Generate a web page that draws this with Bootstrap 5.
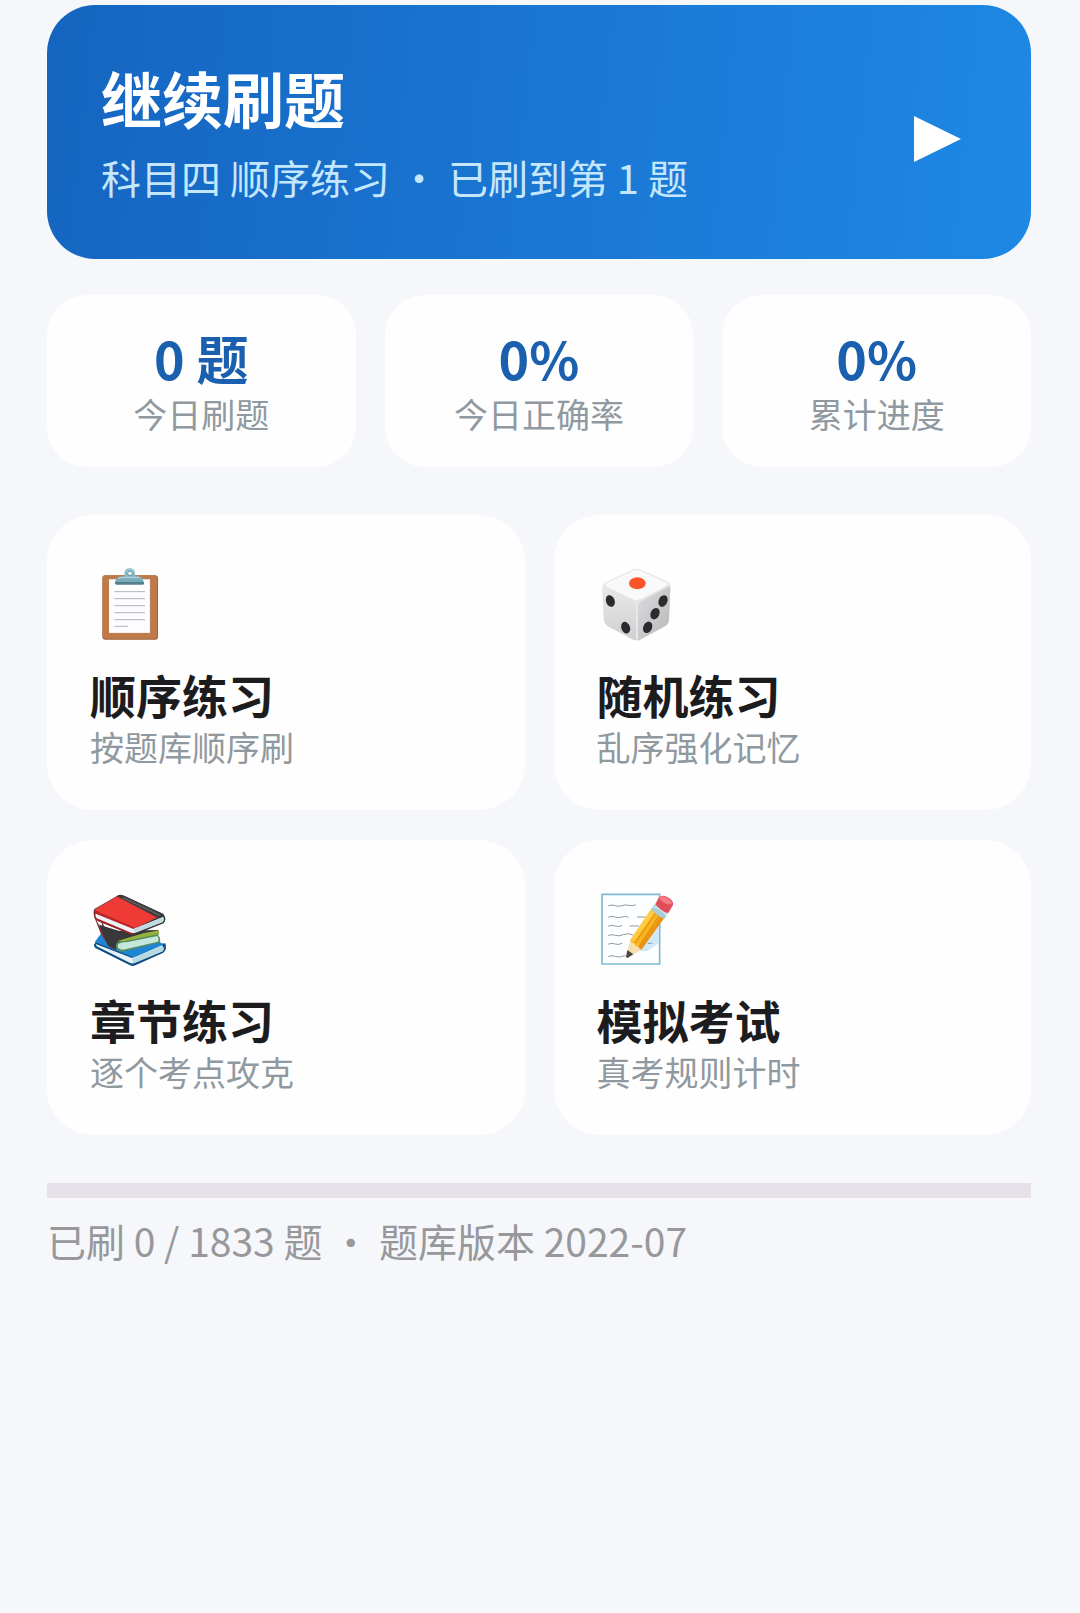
<!DOCTYPE html>
<html lang="zh-CN">
<head>
<meta charset="utf-8">
<meta name="viewport" content="width=device-width, initial-scale=1">
<title>驾考刷题</title>
<link href="https://cdn.jsdelivr.net/npm/bootstrap@5.3.0/dist/css/bootstrap.min.css" rel="stylesheet">
<style>
  body { background: #f5f7fb; font-family: "Noto Sans CJK SC", sans-serif; color: #1c1c1e; }
  .page { padding: 5px 49px 48px 47px; }
  .hero { padding: 54px 70px 58px 54px; border-radius: 48px; color: #fff; background: linear-gradient(96deg, #1565c0, #1e88e5); }
  .hero:hover { color: #fff; }
  .hero-title { font-size: 61px; line-height: 78px; font-weight: 700; }
  .hero-sub { font-size: 40px; line-height: 48px; margin-top: 16px; color: #c5e7fd; }
  .play { margin-top: 18px; }
  .tiles { --bs-gutter-x: 29px; --bs-gutter-y: 30px; }
  .stats { padding-top: 36px; }
  .modes { padding-top: 48px; }
  .panel { border: 0; background: #fefefe; }
  .stat { padding: 30px 16px; border-radius: 40px; }
  .stat-value { font-size: 52px; line-height: 66px; font-weight: 700; color: #1a60ae; }
  .caption { font-size: 34px; line-height: 46px; color: #90999f; }
  .mode { padding: 49px 43px 40px; border-radius: 46px; color: #1c1c1e; }
  .mode-icon { width: 80px; height: 80px; margin-bottom: 20px; }
  .mode-title { font-size: 46px; line-height: 60px; font-weight: 700; }
  .meter { height: 15px; margin-top: 48px; border-radius: 0; background: #e6e1e8; }
  .summary { font-size: 39px; line-height: 56px; margin-top: 14px; color: #98989b; }
</style>
</head>
<body>
<main class="page">
  <a href="#continue" class="hero d-flex align-items-center justify-content-between text-decoration-none">
    <div>
      <h1 class="hero-title mb-0">继续刷题</h1>
      <p class="hero-sub mb-0">科目四 顺序练习 · 已刷到第 1 题</p>
    </div>
    <svg class="play flex-shrink-0" width="48" height="48" viewBox="0 0 48 48" aria-hidden="true"><path d="M1 1 48 24 1 47Z" fill="#fff"/></svg>
  </a>

  <section class="stats">
    <div class="row row-cols-3 tiles gy-0 text-center">
      <div class="col"><div class="card panel stat"><div class="stat-value">0 题</div><div class="caption">今日刷题</div></div></div>
      <div class="col"><div class="card panel stat"><div class="stat-value">0%</div><div class="caption">今日正确率</div></div></div>
      <div class="col"><div class="card panel stat"><div class="stat-value">0%</div><div class="caption">累计进度</div></div></div>
    </div>
  </section>

  <nav class="modes">
    <div class="row row-cols-2 tiles mt-0">
      <div class="col mt-0">
        <a href="#sequence" class="card panel mode text-decoration-none">
          <svg class="mode-icon" viewBox="30 42 240 240" aria-hidden="true">
            <defs><linearGradient id="clip" x1="0" y1="0" x2="0" y2="1"><stop offset="0" stop-color="#9cc9d6"/><stop offset="1" stop-color="#6fa3b3"/></linearGradient></defs>
            <rect x="67" y="76" width="167" height="193" rx="9" fill="#9c6339"/>
            <rect x="68" y="76" width="163" height="190" rx="8" fill="#bf7a47"/>
            <path d="M87 88H211V250H87Z" fill="#fdfdff"/>
            <path d="M211 88V250H87" fill="none" stroke="#a7683c" stroke-width="2"/>
            <path d="M103 125H195M103 146H195M103 167H195M103 188H195M103 209H195M103 229H144" stroke="#b4b2b8" stroke-width="3"/>
            <path d="M133 78V70Q133 55 149 54Q165 55 165 70V78L181 80Q190 81 191 101H105Q106 82 118 80Z" fill="url(#clip)"/>
            <path d="M105 96H192V101Q192 104 188 104H110Q105 104 105 99Z" fill="#547f8d"/>
            <circle cx="150" cy="70" r="7" fill="#f4fafb" stroke="#5f92a2" stroke-width="3"/>
            <path d="M114 85Q120 82 134 82H177" fill="none" stroke="#b8dbe3" stroke-width="3"/>
          </svg>
          <div class="mode-title">顺序练习</div>
          <div class="caption">按题库顺序刷</div>
        </a>
      </div>
      <div class="col mt-0">
        <a href="#random" class="card panel mode text-decoration-none">
          <svg class="mode-icon" viewBox="21 42 240 240" aria-hidden="true">
            <defs>
              <linearGradient id="dieL" x1="0" y1="0" x2="0" y2="1"><stop offset="0" stop-color="#e8e8e9"/><stop offset="1" stop-color="#d0d0d2"/></linearGradient>
              <linearGradient id="dieR" x1="0" y1="0" x2="1" y2="1"><stop offset="0" stop-color="#dcdcde"/><stop offset="1" stop-color="#b8b8bb"/></linearGradient>
            </defs>
            <path d="M50 96 127 59Q140 53 153 59L230 94Q241 100 241 114L237 210Q236 222 226 228L156 266Q141 275 126 267L54 229Q44 223 42 211L37 116Q37 102 50 96Z" fill="#e4e4e6"/>
            <path d="M38 110 132 157Q139 162 139 171V271Q132 271 126 267L54 229Q44 223 42 211L37 118Z" fill="url(#dieL)"/>
            <path d="M240 108 152 155Q143 160 143 171V272Q149 271 156 266L226 228Q236 222 237 210L241 114Z" fill="url(#dieR)"/>
            <path d="M51 98 129 62Q140 57 152 62L228 97Q237 103 227 109L153 147Q140 154 127 147L51 111Q41 105 51 98Z" fill="#f9f9fa"/>
            <path d="M141 158V266" stroke="#e9e9eb" stroke-width="5" stroke-linecap="round"/>
            <ellipse cx="142" cy="100" rx="25" ry="18" fill="#f8552b"/>
            <g fill="#2b2b2e">
              <ellipse cx="61" cy="153" rx="13" ry="18" transform="rotate(-20 61 153)"/>
              <ellipse cx="107" cy="233" rx="13" ry="18" transform="rotate(-20 107 233)"/>
              <ellipse cx="219" cy="153" rx="13" ry="18" transform="rotate(25 219 153)"/>
              <ellipse cx="195" cy="191" rx="13" ry="18" transform="rotate(25 195 191)"/>
              <ellipse cx="173" cy="232" rx="13" ry="18" transform="rotate(25 173 232)"/>
            </g>
          </svg>
          <div class="mode-title">随机练习</div>
          <div class="caption">乱序强化记忆</div>
        </a>
      </div>
      <div class="col">
        <a href="#chapter" class="card panel mode text-decoration-none">
          <svg class="mode-icon" viewBox="30 27 240 240" aria-hidden="true">
            <path d="M42 194 70 152 160 200 256 190Q262 208 250 218L166 256Q158 260 150 256L46 204Q41 200 42 194Z" fill="#124d82"/>
            <path d="M44 186 70 152 240 186 250 194 160 232Z" fill="#1c86d4"/>
            <path d="M47 192 156 234Q166 231 246 196Q254 206 248 214L164 249Q156 252 149 248L50 199Z" fill="#e4f3f7"/>
            <path d="M157 236 248 197Q254 206 248 214L160 250Z" fill="#b4d9e2"/>
            <path d="M43 112 66 125 108 208Q92 206 84 196L62 160Z" fill="#7b2d32"/>
            <path d="M43 112 62 118 70 150 58 136Z" fill="#fefefe"/>
            <path d="M58 134 116 152 234 150Q240 156 236 164L120 184 108 210 84 196Z" fill="#38383b"/>
            <path d="M112 183 190 160 236 151Q240 158 236 164L150 190Z" fill="#94b23e"/>
            <path d="M110 188Q118 182 134 184L232 163Q246 176 238 188L136 213Q122 217 112 211Q104 200 110 188Z" fill="#588b60"/>
            <path d="M116 191Q126 185 140 187L232 168Q239 178 233 185L136 208Q124 211 116 205Q110 198 116 191Z" fill="#c5e8dc"/>
            <path d="M42 88 112 47Q120 42 132 47L250 102Q262 116 251 130L168 163Q160 168 150 163L48 121Q38 106 42 88Z" fill="#38383b"/>
            <path d="M42 100 158 150V165L48 121Q41 112 42 100Z" fill="#a52327"/>
            <path d="M42 90 112 48 236 110 162 146Z" fill="#ee3b35"/>
            <path d="M110 49Q120 42 132 47L250 102 230 112Z" fill="#3b3b3e"/>
            <path d="M128 53 240 106" stroke="#66666a" stroke-width="4"/>
            <path d="M42 90 162 142 160 150 46 103Z" fill="#bb2428"/>
            <path d="M47 101 160 147Q170 143 249 111Q254 119 248 126L166 158Q158 161 150 157L50 115Q44 108 47 101Z" fill="#eef3f5"/>
            <path d="M161 147 249 111Q254 119 248 126L163 159Z" fill="#c1dbe2"/>
          </svg>
          <div class="mode-title">章节练习</div>
          <div class="caption">逐个考点攻克</div>
        </a>
      </div>
      <div class="col">
        <a href="#exam" class="card panel mode text-decoration-none">
          <svg class="mode-icon" viewBox="21 27 240 240" aria-hidden="true">
            <path d="M36 43H209V252H36Z" fill="#fdfeff" stroke="#81b9d4" stroke-width="5"/>
            <path d="M207 120V190L170 214 140 212Z" fill="#cfe9f8"/>
            <g fill="none" stroke="#96979c" stroke-width="3" stroke-linecap="round">
              <path d="M56 77q10-4 20 0t20 0t20-1t20-1M56 111q10-4 20 0t20 0t18 0M142 111h24M56 138q10-4 20 0t19-1M120 138h26M56 166q10-4 20 0t24-2t28 0M56 192q10-4 20 0t20-2M174 190h12M56 229q10-4 20 0t20 0t20 1"/>
            </g>
            <path d="M186 84 224 112 154 209Q139 211 128 199 117 190 121 180Z" fill="#f9b51b"/>
            <path d="M186 84 198 92 131 186 121 180Z" fill="#fdcc42"/>
            <path d="M214 105 224 112 154 209 144 205Z" fill="#e89412"/>
            <path d="M199 96 135 190M209 104 147 200" stroke="#d68518" stroke-width="3"/>
            <path d="M121 179Q123 190 133 189 136 200 145 199 146 207 154 209L112 234Q107 233 109 227Z" fill="#f7dfad"/>
            <path d="M112 210 130 223 112 234Q107 233 109 227Z" fill="#47444a"/>
            <path d="M193 73Q209 72 234 99L224 116Q205 112 184 88Z" fill="#a6ced6"/>
            <path d="M190 80Q208 83 230 106" fill="none" stroke="#d7ebee" stroke-width="4"/>
            <path d="M207 52Q214 43 232 51 252 62 249 75L235 99Q213 95 196 72Z" fill="#e24d5b"/>
            <path d="M207 52Q214 45 231 53 247 62 245 72 236 76 222 68 209 60 207 52Z" fill="#f17c83"/>
          </svg>
          <div class="mode-title">模拟考试</div>
          <div class="caption">真考规则计时</div>
        </a>
      </div>
    </div>
  </nav>

  <div class="progress meter" role="progressbar" aria-label="累计进度" aria-valuenow="0" aria-valuemin="0" aria-valuemax="1833"><div class="progress-bar" style="width: 0%"></div></div>
  <p class="summary mb-0">已刷 0 / 1833 题 · 题库版本 2022-07</p>
</main>
<script src="https://cdn.jsdelivr.net/npm/bootstrap@5.3.0/dist/js/bootstrap.bundle.min.js"></script>
</body>
</html>
